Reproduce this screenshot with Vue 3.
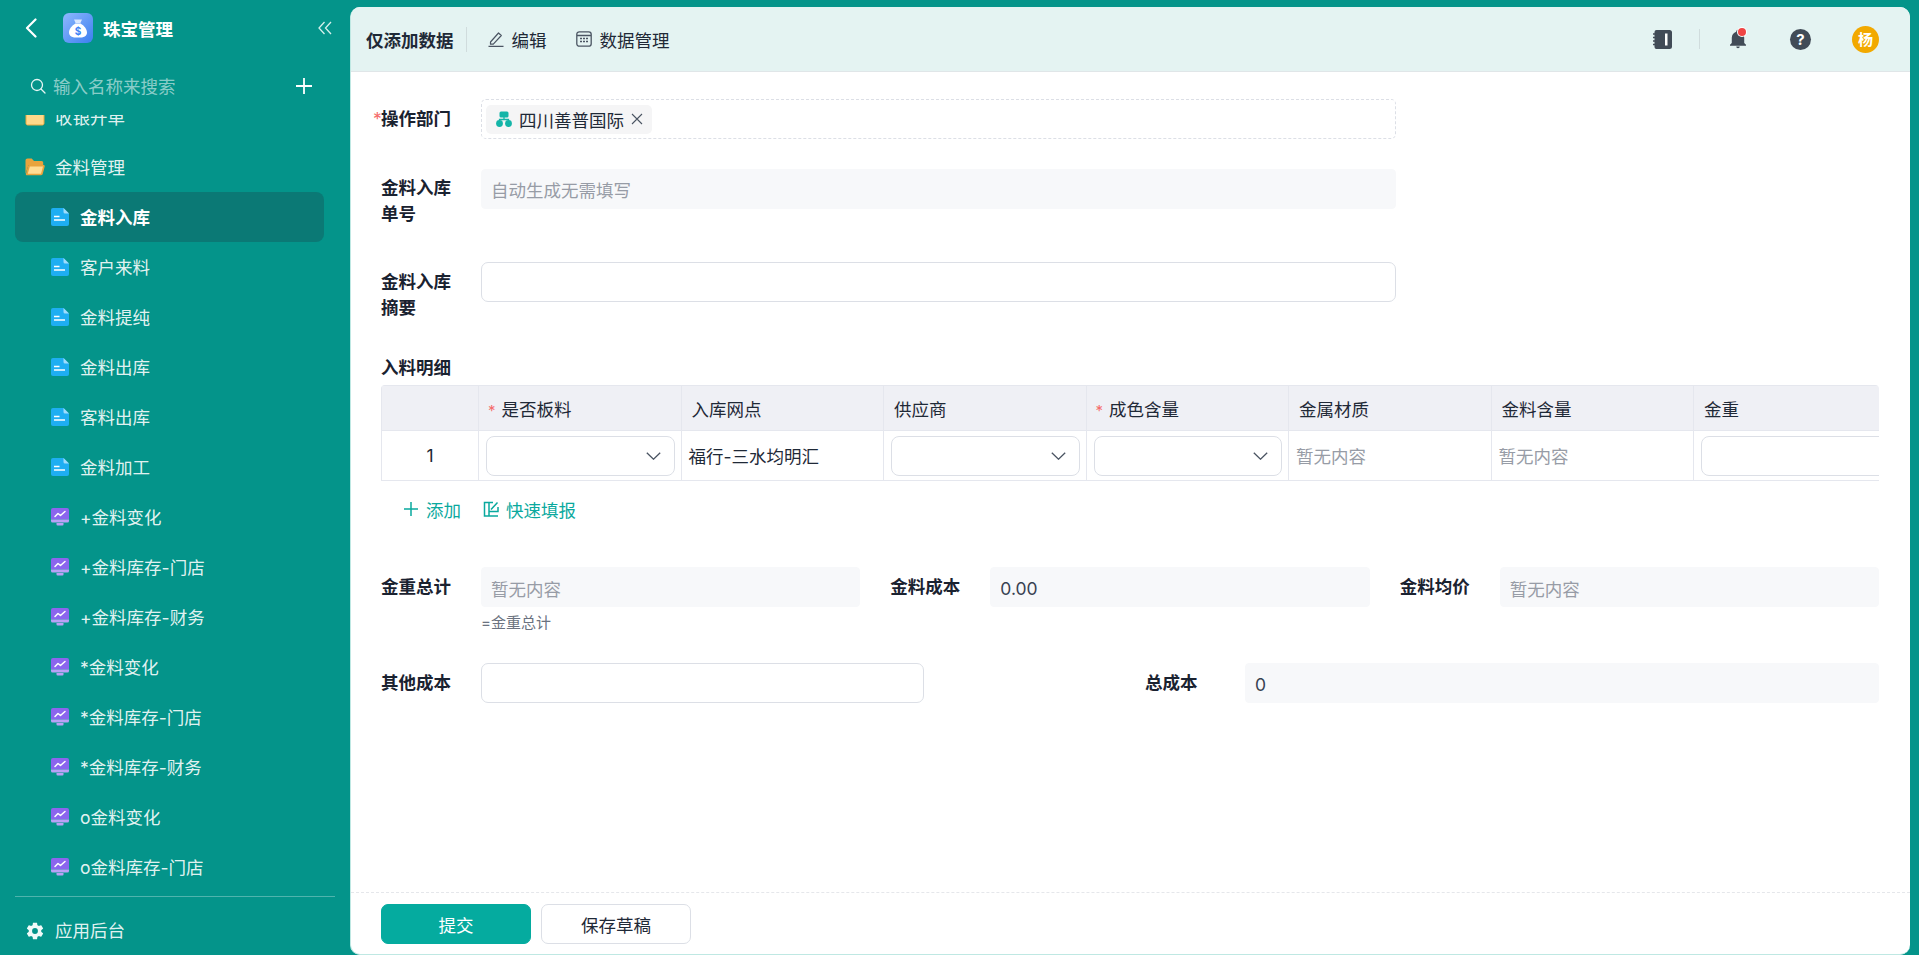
<template>
  <div class="page">
    <aside class="sidebar">
      <div class="side-head">
        <svg class="back" viewBox="0 0 12 20" width="12" height="20"><path d="M10.5 1.5 2 10l8.5 8.5" fill="none" stroke="#fff" stroke-width="2.2" stroke-linecap="round" stroke-linejoin="round"/></svg>
        <div class="logo">
          <svg viewBox="0 0 30 30" width="30" height="30">
            <path d="M11 6.5h8l-1.6 3.4h-4.8z" fill="#dbe8ff"/>
            <path d="M12.4 10.4h5.2c3.6 2.2 6.4 5.6 6.4 9 0 3.6-3 5.2-9 5.2s-9-1.600-9-5.200c0-3.400 2.800-6.800 6.400-9z" fill="#fff"/>
            <text x="15" y="21.500" text-anchor="middle" font-size="10" font-weight="700" fill="#3b82f6">$</text>
          </svg>
        </div>
        <span class="app-name">珠宝管理</span>
        <svg class="collapse" viewBox="0 0 14 14" width="14" height="14"><path d="M6.500 1 1 7l5.500 6M13 1 7.500 7l5.500 6" fill="none" stroke="#d5f0ec" stroke-width="1.300"/></svg>
      </div>

      <div class="side-search">
        <svg viewBox="0 0 16 16" width="16" height="16"><circle cx="7" cy="7" r="5.500" fill="none" stroke="#e6f6f4" stroke-width="1.300"/><path d="m11 11 4 4" stroke="#e6f6f4" stroke-width="1.300" stroke-linecap="round"/></svg>
        <span class="search-text">输入名称来搜索</span>
        <svg class="plus" viewBox="0 0 16 16" width="16" height="16"><path d="M8 0v16M0 8h16" stroke="#fff" stroke-width="1.800"/></svg>
      </div>

      <div class="side-list">
        <div class="side-scroll">
          <div class="group-row">
            <svg viewBox="0 0 20 18" width="20" height="18"><path d="M1 3.500C1 2.700 1.700 2 2.500 2h5L9.500 4H17.500c.8 0 1.500.7 1.500 1.500v10c0 .8-.7 1.500-1.500 1.500h-15C1.700 17 1 16.300 1 15.500z" fill="#ffd98a" stroke="#e9a93f"/></svg>
            <span>收银开单</span>
          </div>
          <div class="group-row">
            <svg viewBox="0 0 20 18" width="20" height="18">
              <path d="M0.500 2.500C0.500 1.400 1.400.5 2.500.5h4.200L9 3h7.500c1.100 0 1.700.8 1.700 1.700V7H3.500L.5 16z" fill="#e8a33d"/>
              <path d="M4 7h14.600c.8 0 1.300.7 1.100 1.400l-2 7.700c-.2.7-.8 1.200-1.500 1.200H2c-.8 0-1.300-.7-1.100-1.400l2-7.700C3.100 7.500 3.500 7 4 7z" fill="#e8a33d"/>
              <path d="M4.800 8.500h13.200l-2 7.300H2.800z" fill="#ffdc94"/>
            </svg>
            <span>金料管理</span>
          </div>
          <div v-for="item in menu" :key="item.name" class="menu-row" :class="{ active: item.active }">
            <svg v-if="item.type === 'doc'" viewBox="0 0 18 18" width="18" height="18">
              <path d="M2 0h10.500L18 5.500V16a2 2 0 0 1-2 2H2a2 2 0 0 1-2-2V2a2 2 0 0 1 2-2z" fill="#1eaef2"/>
              <path d="M12.500 0 18 5.500h-4a1.500 1.500 0 0 1-1.500-1.500z" fill="#9fdcfb"/>
              <path d="M3 8.500h5.500M3 12h11" stroke="#fff" stroke-width="1.500"/>
            </svg>
            <svg v-else viewBox="0 0 18 18" width="18" height="18">
              <path d="M2 0h14a2 2 0 0 1 2 2v9.500H0V2a2 2 0 0 1 2-2z" fill="#8b65ee"/>
              <path d="M0 11.500h18V13a1.500 1.500 0 0 1-1.500 1.500h-15A1.500 1.500 0 0 1 0 13z" fill="#b9a1f7"/>
              <path d="M5.500 15h7v1.500a1 1 0 0 1-1 1h-5a1 1 0 0 1-1-1z" fill="#b9a1f7"/>
              <path d="m4 8.500 3-3 2.500 2L14 3.500" fill="none" stroke="#fff" stroke-width="1.500" stroke-linecap="round" stroke-linejoin="round"/>
            </svg>
            <span>{{ item.name }}</span>
          </div>
        </div>
      </div>

      <div class="side-foot">
        <svg viewBox="0 0 24 24" width="20" height="20"><path fill="#f0faf8" d="M12,15.500A3.500,3.500 0 0,1 8.500,12A3.500,3.500 0 0,1 12,8.500A3.500,3.500 0 0,1 15.500,12A3.500,3.500 0 0,1 12,15.500M19.430,12.970C19.470,12.650 19.500,12.330 19.500,12C19.500,11.670 19.470,11.340 19.430,11L21.540,9.370C21.730,9.220 21.780,8.950 21.660,8.730L19.660,5.270C19.540,5.050 19.270,4.960 19.050,5.050L16.560,6.050C16.040,5.660 15.500,5.320 14.870,5.070L14.500,2.420C14.460,2.180 14.250,2 14,2H10C9.750,2 9.540,2.180 9.500,2.420L9.130,5.070C8.500,5.320 7.960,5.660 7.440,6.050L4.950,5.050C4.730,4.960 4.460,5.050 4.340,5.270L2.340,8.730C2.210,8.950 2.270,9.220 2.460,9.370L4.570,11C4.530,11.340 4.500,11.670 4.500,12C4.500,12.330 4.530,12.650 4.570,12.970L2.460,14.630C2.270,14.780 2.210,15.050 2.340,15.270L4.340,18.730C4.460,18.950 4.730,19.030 4.950,18.950L7.440,17.940C7.960,18.340 8.500,18.680 9.130,18.930L9.500,21.580C9.540,21.820 9.750,22 10,22H14C14.250,22 14.460,21.820 14.500,21.580L14.870,18.930C15.500,18.670 16.040,18.340 16.560,17.940L19.050,18.950C19.270,19.030 19.540,18.950 19.660,18.730L21.660,15.270C21.780,15.050 21.730,14.780 21.540,14.630L19.430,12.970Z"/></svg>
        <span>应用后台</span>
      </div>
    </aside>

    <main class="main">
      <header class="top">
        <span class="top-title">仅添加数据</span>
        <i class="top-div"></i>
        <a class="tool tool-edit">
          <svg viewBox="0 0 16 16" width="16" height="16"><path d="M2.500 11 10.500 2 13.300 4.500l-8 8.700H2.500z" fill="none" stroke="#4b5563" stroke-width="1.200" stroke-linejoin="round"/><path d="M.5 15.400h15" stroke="#4b5563" stroke-width="1.200"/></svg>
          <span>编辑</span>
        </a>
        <a class="tool tool-data">
          <svg viewBox="0 0 16 16" width="16" height="16"><rect x=".8" y=".8" width="14.400" height="14.400" rx="2.500" fill="none" stroke="#4b5563" stroke-width="1.300"/><path d="M1 4.500h14" stroke="#4b5563" stroke-width="1.300"/><path d="M4 7.500h2M7 7.500h2M10 7.500h2M4 10.500h2M7 10.500h2M10 10.500h2" stroke="#4b5563" stroke-width="1.400"/></svg>
          <span>数据管理</span>
        </a>
        <div class="top-right">
          <svg viewBox="0 0 19 19" width="19" height="19">
            <path d="M3.500 0H16.500A2.500 2.500 0 0 1 19 2.500v14a2.500 2.500 0 0 1-2.500 2.500H3.500A2 2 0 0 1 1.500 17V2A2 2 0 0 1 3.500 0z" fill="#414b57"/>
            <path d="M0 4h3M0 7.500h3M0 11h3M0 14.500h3" stroke="#414b57" stroke-width="1.500"/>
            <rect x="12" y="3.500" width="2.500" height="12" fill="#fff"/>
          </svg>
          <i class="top-div right-div"></i>
          <span class="bell">
            <svg viewBox="3 2 18 21" width="16" height="20"><path fill="#414b57" d="M21,19V20H3V19L5,17V11C5,7.900 7.030,5.170 10,4.290C10,4.190 10,4.100 10,4A2,2 0 0,1 12,2A2,2 0 0,1 14,4C14,4.100 14,4.190 14,4.290C16.970,5.170 19,7.900 19,11V17L21,19M14,21A2,2 0 0,1 12,23A2,2 0 0,1 10,21"/></svg>
            <i class="dot"></i>
          </span>
          <span class="help">?</span>
          <span class="avatar">杨</span>
        </div>
      </header>

      <div class="form">
        <div class="row first-row">
          <label class="lbl"><span class="req">*</span>操作部门</label>
          <div class="dept-box">
            <span class="tag">
              <svg viewBox="0 0 16 16" width="16" height="16"><rect x="3.500" y=".5" width="9" height="6" rx="1.500" fill="#14b5a8"/><path d="M8 6v3M3.500 11V8.500h9V11" fill="none" stroke="#14b5a8" stroke-width="1.300"/><circle cx="3.500" cy="12.500" r="3.400" fill="#14b5a8"/><circle cx="12.500" cy="12.500" r="3.400" fill="#14b5a8"/></svg>
              <span>四川善普国际</span>
              <svg class="tag-x" viewBox="0 0 12 12" width="12" height="12"><path d="m1 1 10 10M11 1 1 11" stroke="#4b5563" stroke-width="1.100"/></svg>
            </span>
          </div>
        </div>
        <div class="row">
          <label class="lbl tall">金料入库<br>单号</label>
          <div class="field wide readonly placeholder">自动生成无需填写</div>
        </div>
        <div class="row">
          <label class="lbl tall lower">金料入库<br>摘要</label>
          <div class="field wide"></div>
        </div>

        <div class="sub-title">入料明细</div>
        <div class="table-wrap">
          <table class="detail">
            <colgroup>
              <col class="col-no">
              <col v-for="c in columns" :key="c.name" class="col-item">
            </colgroup>
            <thead>
              <tr>
                <th></th>
                <th v-for="c in columns" :key="c.name" :class="{ starred: c.req }"><span v-if="c.req" class="req">*</span>{{ c.name }}</th>
              </tr>
            </thead>
            <tbody>
              <tr>
                <td class="no">1</td>
                <td v-for="c in columns" :key="c.name">
                  <div v-if="c.kind === 'select'" class="select">
                    <svg viewBox="0 0 15 8" width="15" height="8"><path d="m.8.8 6.700 6.400L14.200.8" fill="none" stroke="#4b5563" stroke-width="1.300"/></svg>
                  </div>
                  <div v-else-if="c.kind === 'input'" class="cell-input"></div>
                  <span v-else-if="c.kind === 'empty'" class="placeholder">暂无内容</span>
                  <span v-else>{{ c.value }}</span>
                </td>
              </tr>
            </tbody>
          </table>
        </div>

        <div class="actions">
          <a class="act act-add">
            <svg viewBox="0 0 16 16" width="16" height="16"><path d="M8 1v14M1 8h14" stroke="#0aa99e" stroke-width="1.500"/></svg>
            <span>添加</span>
          </a>
          <a class="act">
            <svg viewBox="0 0 16 16" width="16" height="16"><path d="M15 15H1.500V1.500H10M6 1.500V15M6 10.500h9V6M8 8.500l6.500-7" fill="none" stroke="#0aa99e" stroke-width="1.500"/></svg>
            <span>快速填报</span>
          </a>
        </div>

        <div class="totals">
          <div class="cell">
            <label class="lbl">金重总计</label>
            <div class="grow">
              <div class="field readonly placeholder">暂无内容</div>
              <div class="hint">=金重总计</div>
            </div>
          </div>
          <div class="cell">
            <label class="lbl">金料成本</label>
            <div class="grow"><div class="field readonly">0.00</div></div>
          </div>
          <div class="cell">
            <label class="lbl">金料均价</label>
            <div class="grow"><div class="field readonly placeholder">暂无内容</div></div>
          </div>
        </div>

        <div class="costs">
          <div class="cell">
            <label class="lbl">其他成本</label>
            <div class="field short"></div>
          </div>
          <div class="cell">
            <label class="lbl">总成本</label>
            <div class="grow"><div class="field readonly">0</div></div>
          </div>
        </div>
      </div>

      <footer class="foot">
        <button class="btn primary">提交</button>
        <button class="btn">保存草稿</button>
      </footer>
    </main>
  </div>
</template>

<script setup>
const menu = [
  { name: '金料入库', type: 'doc', active: true },
  { name: '客户来料', type: 'doc' },
  { name: '金料提纯', type: 'doc' },
  { name: '金料出库', type: 'doc' },
  { name: '客料出库', type: 'doc' },
  { name: '金料加工', type: 'doc' },
  { name: '+金料变化', type: 'chart' },
  { name: '+金料库存-门店', type: 'chart' },
  { name: '+金料库存-财务', type: 'chart' },
  { name: '*金料变化', type: 'chart' },
  { name: '*金料库存-门店', type: 'chart' },
  { name: '*金料库存-财务', type: 'chart' },
  { name: 'o金料变化', type: 'chart' },
  { name: 'o金料库存-门店', type: 'chart' }
]

const columns = [
  { name: '是否板料', req: true, kind: 'select' },
  { name: '入库网点', kind: 'text', value: '福行-三水均明汇' },
  { name: '供应商', kind: 'select' },
  { name: '成色含量', req: true, kind: 'select' },
  { name: '金属材质', kind: 'empty' },
  { name: '金料含量', kind: 'empty' },
  { name: '金重', kind: 'input' }
]
</script>

<style>
html,
body {
  margin: 0;
  background: #04948a;
}
</style>

<style scoped>
* {
  box-sizing: border-box;
}

.page {
  display: flex;
  height: 955px;
  overflow: hidden;
  background: #04948a;
  font-family: Inter, "Noto Sans CJK SC", sans-serif;
  font-size: 17.5px;
  color: #1f2937;
}

/* sidebar */
.sidebar {
  width: 350px;
  flex-shrink: 0;
  display: flex;
  flex-direction: column;
  color: rgba(255, 255, 255, 0.9);
}

.side-head {
  height: 56px;
  display: flex;
  align-items: center;
  padding: 0 18px 0 25px;
  flex-shrink: 0;
}

.logo {
  width: 30px;
  height: 30px;
  margin-left: 26px;
  border-radius: 6px;
  background: linear-gradient(135deg, #8fb8fd, #3b7ff0);
}

.logo svg {
  display: block;
}

.app-name {
  margin-left: 10px;
  font-weight: 700;
  color: #fff;
}

.collapse {
  margin-left: auto;
}

.side-search {
  height: 59px;
  flex-shrink: 0;
  display: flex;
  align-items: center;
  padding: 0 38px 0 30px;
  gap: 7px;
}

.search-text {
  color: rgba(255, 255, 255, 0.55);
}

.plus {
  margin-left: auto;
}

.side-list {
  flex: 1;
  overflow: hidden;
}

.side-scroll {
  margin-top: -23px;
}

.group-row {
  height: 50px;
  display: flex;
  align-items: center;
  padding-left: 25px;
  gap: 10px;
}

.group-row span,
.menu-row span {
  margin-top: -2px;
}

.menu-row {
  height: 50px;
  margin: 0 26px 0 15px;
  display: flex;
  align-items: center;
  padding-left: 36px;
  gap: 11px;
  border-radius: 8px;
}

.menu-row.active {
  background: #0b7975;
  font-weight: 700;
  color: #fff;
}

.side-foot {
  height: 59px;
  flex-shrink: 0;
  margin: 0 15px;
  padding: 21px 0 0 10px;
  border-top: 1px solid rgba(255, 255, 255, 0.3);
  display: flex;
  align-items: flex-start;
  gap: 10px;
  line-height: 26px;
}

.side-foot svg {
  margin-top: 3px;
}

/* main panel */
.main {
  flex: 1;
  margin: 7px 9px 0 0;
  display: flex;
  flex-direction: column;
  background: #fff;
  border-radius: 10px;
  border-left: 1px solid #bfe8e3;
  border-bottom: 1px solid #bfe8e3;
  overflow: hidden;
}

.top {
  height: 65px;
  flex-shrink: 0;
  display: flex;
  align-items: center;
  padding: 0 31px 0 15px;
  background: #e4f3f2;
  border-bottom: 1px solid #e0e6e8;
}

.top-title {
  font-weight: 700;
}

.top-div {
  width: 1px;
  height: 25px;
  margin-left: 12px;
  background: #d0dcdd;
}

.tool {
  display: flex;
  align-items: center;
  gap: 8px;
}

.tool-edit {
  margin-left: 21px;
}

.tool-data {
  margin-left: 29px;
}

.top-right {
  margin-left: auto;
  display: flex;
  align-items: center;
}

.right-div {
  height: 20px;
  margin-left: 27px;
}

.bell {
  position: relative;
  display: block;
  height: 20px;
  margin-left: 30px;
}

.bell svg {
  display: block;
}

.dot {
  position: absolute;
  top: -1px;
  right: 0;
  width: 8px;
  height: 8px;
  border-radius: 50%;
  background: #ef4444;
  box-shadow: 0 0 0 1px #fff;
}

.help {
  width: 21px;
  height: 21px;
  margin-left: 44px;
  border-radius: 50%;
  background: #414b57;
  color: #fff;
  font-size: 15px;
  font-weight: 700;
  line-height: 21px;
  text-align: center;
}

.avatar {
  width: 27px;
  height: 27px;
  margin-left: 41px;
  border-radius: 50%;
  background: #f2a900;
  color: #fff;
  font-size: 15px;
  font-weight: 700;
  line-height: 27px;
  text-align: center;
}

/* form */
.form {
  flex: 1;
  padding: 27px 30px 0 30px;
  overflow: hidden;
}

.row {
  display: flex;
  align-items: flex-start;
  margin-bottom: 35px;
}

.first-row {
  margin-bottom: 30px;
  align-items: center;
}

.lbl {
  width: 100px;
  flex-shrink: 0;
  position: relative;
  font-weight: 700;
  line-height: 26px;
  color: #1a2230;
}

.lbl.tall {
  padding-top: 6px;
}

.lbl.lower {
  padding-top: 7px;
  margin-bottom: -1px;
}

.req {
  color: #f56c6c;
  font-weight: 400;
}

.first-row .req {
  position: absolute;
  left: -8px;
  top: 0;
}

.dept-box {
  width: 915px;
  height: 40px;
  display: flex;
  align-items: center;
  padding-left: 4px;
  border: 1px dashed #dcdfe6;
  border-radius: 5px;
}

.tag {
  height: 29px;
  display: flex;
  align-items: center;
  padding: 0 9px 0 10px;
  gap: 7px;
  border-radius: 5px;
  background: #f5f5f6;
}

.field {
  height: 40px;
  display: flex;
  align-items: center;
  padding: 0 9px;
  border: 1px solid #dcdfe6;
  border-radius: 7px;
}

.field.wide {
  width: 915px;
}

.field.short {
  width: 443px;
}

.field.readonly {
  background: #f7f8fa;
  border-color: #f7f8fa;
  border-radius: 4px;
  color: #374151;
}

.cell .field.readonly {
  padding-top: 2px;
}

.placeholder {
  color: #979ca6 !important;
}

.sub-title {
  font-weight: 700;
  line-height: 26px;
  margin-bottom: 4px;
  color: #1a2230;
}

.table-wrap {
  width: 1498px;
  overflow: hidden;
  border-radius: 4px 4px 0 0;
}

.detail {
  width: 1514.5px;
  table-layout: fixed;
  border-collapse: collapse;
  border-top: 1px solid #e5e7ee;
  border-left: 1px solid #e5e7ee;
}

.col-no {
  width: 97px;
}

.col-item {
  width: 202.5px;
}

.detail th {
  height: 45px;
  padding: 0 10px;
  background: #eff0f5;
  border-right: 1px solid #e5e7ee;
  border-bottom: 1px solid #e5e7ee;
  font-weight: 400;
  text-align: left;
  color: #1f2937;
}

.detail th.starred {
  padding-left: 9px;
}

.detail th .req {
  margin-right: 6px;
  font-size: 15px;
}

.detail td {
  height: 50px;
  padding: 0 6px 0 7px;
  border-right: 1px solid #e5e7ee;
  border-bottom: 1px solid #e5e7ee;
}

.detail td.no {
  padding: 0;
  text-align: center;
}

.select,
.cell-input {
  height: 40px;
  border: 1px solid #dcdfe6;
  border-radius: 8px;
}

.select {
  display: flex;
  align-items: center;
  justify-content: flex-end;
  padding-right: 13px;
}

.cell-input {
  width: 210px;
}

.actions {
  display: flex;
  margin-top: 15px;
  padding-left: 22px;
  height: 26px;
  margin-bottom: 45px;
  color: #0aa99e;
}

.act {
  display: flex;
  align-items: center;
  gap: 7px;
}

.act-add {
  margin-right: 22px;
}

.totals {
  display: grid;
  grid-template-columns: repeat(3, 1fr);
  column-gap: 30px;
  width: 1498px;
  height: 66px;
  margin-bottom: 30px;
}

.costs {
  display: grid;
  grid-template-columns: repeat(2, 1fr);
  column-gap: 30px;
  width: 1498px;
}

.cell {
  display: flex;
  align-items: flex-start;
}

.cell > .lbl {
  line-height: 40px;
}

.grow {
  flex: 1;
  min-width: 0;
}

.hint {
  margin-top: 6px;
  font-size: 15px;
  line-height: 20px;
  color: #6b7280;
}

/* footer */
.foot {
  height: 62px;
  flex-shrink: 0;
  display: flex;
  align-items: flex-start;
  gap: 10px;
  padding: 11px 30px 0;
  border-top: 1px dashed #e5e7eb;
}

.btn {
  width: 150px;
  height: 40px;
  border: 1px solid #dcdfe6;
  border-radius: 7px;
  background: #fff;
  font: inherit;
  color: #1f2937;
}

.btn.primary {
  background: #05ab9f;
  border-color: #05ab9f;
  color: #fff;
}
</style>
